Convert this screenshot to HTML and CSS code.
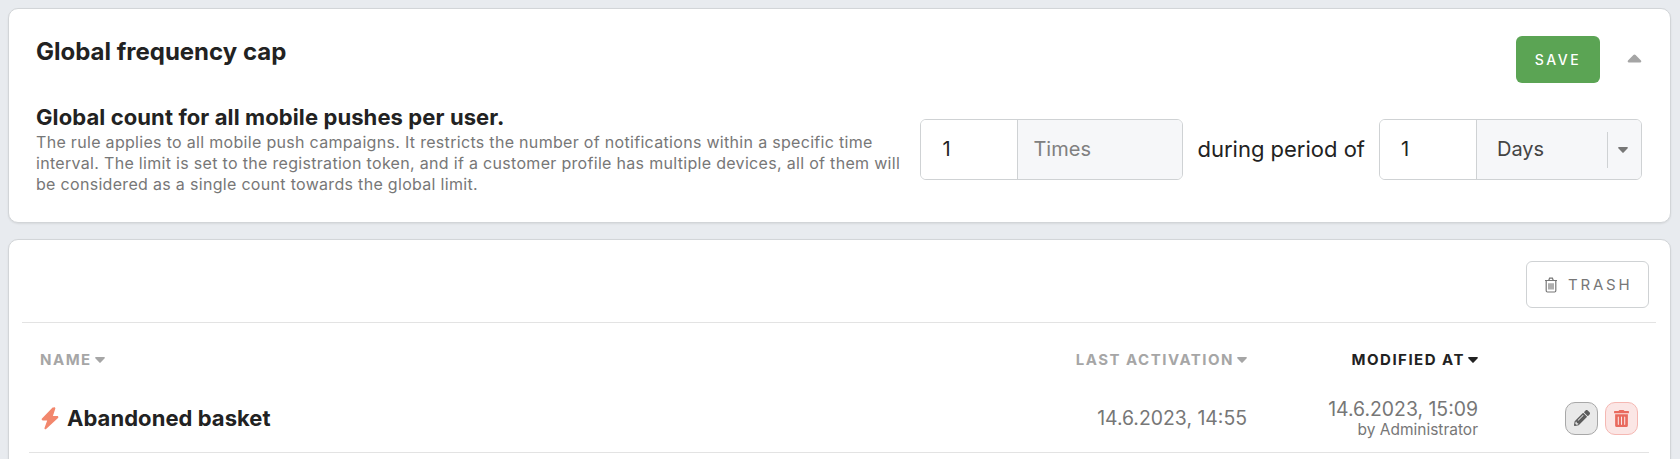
FILE: index.html
```html
<!DOCTYPE html>
<html lang="en">
<head>
<meta charset="utf-8">
<title>Global frequency cap</title>
<link rel="stylesheet" href="styles.css">
</head>
<body>
<section class="card cap">
  <header class="cap-head">
    <h1>Global frequency cap</h1>
    <div class="cap-actions">
      <button class="save">SAVE</button>
      <svg class="collapse" viewBox="0 0 15 9"><path d="M6.4 1 1 6.6C.3 7.4.8 8.6 1.8 8.6h11.4c1 0 1.5-1.2.8-2L8.6 1C8 .3 7 .3 6.4 1z"/></svg>
    </div>
  </header>
  <div class="cap-body">
    <div class="cap-text">
      <h2>Global count for all mobile pushes per user.</h2>
      <p>The rule applies to all mobile push campaigns. It restricts the number of notifications within a specific time interval. The limit is set to the registration token, and if a customer profile has multiple devices, all of them will be considered as a single count towards the global limit.</p>
    </div>
    <div class="cap-controls">
      <div class="group group-times">
        <div class="group-value">1</div>
        <div class="group-addon muted">Times</div>
      </div>
      <span class="during">during period of</span>
      <div class="group group-days">
        <div class="group-value">1</div>
        <div class="group-addon select">
          <span>Days</span>
          <i class="select-sep"></i>
          <svg class="select-caret" viewBox="0 0 10 6"><path d="M.9 0h8.2c.7 0 1 .8.6 1.3L5.6 5.6c-.3.4-.9.4-1.2 0L.3 1.3C-.1.8.2 0 .9 0z"/></svg>
        </div>
      </div>
    </div>
  </div>
</section>

<section class="card list">
  <div class="toolbar">
    <button class="trash">
      <svg class="trash-icon" viewBox="0 0 14 16"><path d="M1 3.5h12M4.8 3.3 5.6 1.2h2.8l.8 2.1M2.2 3.5v10.3c0 .7.5 1.2 1.2 1.2h7.2c.7 0 1.2-.5 1.2-1.2V3.5M5 6.2v6.2M7 6.2v6.2M9 6.2v6.2"/></svg>
      <span>TRASH</span>
    </button>
  </div>
  <div class="table">
    <div class="tr thead">
      <div class="th th-name">NAME<svg class="sort" viewBox="0 0 10 6"><path d="M.9 0h8.2c.7 0 1 .8.6 1.3L5.6 5.6c-.3.4-.9.4-1.2 0L.3 1.3C-.1.8.2 0 .9 0z"/></svg></div>
      <div class="th th-right">LAST ACTIVATION<svg class="sort" viewBox="0 0 10 6"><path d="M.9 0h8.2c.7 0 1 .8.6 1.3L5.6 5.6c-.3.4-.9.4-1.2 0L.3 1.3C-.1.8.2 0 .9 0z"/></svg></div>
      <div class="th th-right th-active">MODIFIED AT<svg class="sort" viewBox="0 0 10 6"><path d="M.9 0h8.2c.7 0 1 .8.6 1.3L5.6 5.6c-.3.4-.9.4-1.2 0L.3 1.3C-.1.8.2 0 .9 0z"/></svg></div>
      <div></div>
    </div>
    <div class="tr row">
      <div class="td-name">
        <svg class="bolt" viewBox="0 0 18 23"><path d="M11.6.6 1 11.6c-.7.7-.2 1.9.8 1.9h4.4L3.5 21c-.3 1 .9 1.7 1.6 1L17 11c.7-.7.2-1.9-.8-1.9h-4.3l2.4-7.4c.3-1-.9-1.8-1.7-1.1z"/></svg>
        <span>Abandoned basket</span>
      </div>
      <div class="td-date">14.6.2023, 14:55</div>
      <div class="td-date">
        <div>14.6.2023, 15:09</div>
        <div class="by">by Administrator</div>
      </div>
      <div class="td-actions">
        <button class="icon-btn edit"><svg viewBox="0 0 512 512"><path d="M497.9 142.1l-46.1 46.1c-4.7 4.7-12.3 4.7-17 0l-111-111c-4.7-4.7-4.7-12.3 0-17l46.1-46.1c18.7-18.7 49.1-18.7 67.9 0l60.1 60.1c18.8 18.7 18.8 49.1 0 67.9zM284.2 99.8L21.6 362.4.4 483.9c-2.9 16.4 11.4 30.6 27.8 27.8l121.5-21.3 262.6-262.6c4.7-4.7 4.7-12.3 0-17l-111-111c-4.8-4.7-12.4-4.7-17.1 0zM124.1 339.9c-5.5-5.5-5.5-14.3 0-19.8l154-154c5.5-5.5 14.3-5.5 19.8 0s5.5 14.3 0 19.8l-154 154c-5.5 5.5-14.3 5.5-19.8 0zM88 424h48v36.3l-64.5 11.3-31.1-31.1L51.7 376H88v48z"/></svg></button>
        <button class="icon-btn del"><svg viewBox="0 0 448 512"><path d="M32 464a48 48 0 0 0 48 48h288a48 48 0 0 0 48-48V128H32zm272-256a16 16 0 0 1 32 0v224a16 16 0 0 1-32 0zm-96 0a16 16 0 0 1 32 0v224a16 16 0 0 1-32 0zm-96 0a16 16 0 0 1 32 0v224a16 16 0 0 1-32 0zM432 32H312l-9.4-18.7A24 24 0 0 0 281.1 0H166.8a23.72 23.72 0 0 0-21.4 13.3L136 32H16A16 16 0 0 0 0 48v32a16 16 0 0 0 16 16h416a16 16 0 0 0 16-16V48a16 16 0 0 0-16-16z"/></svg></button>
      </div>
    </div>
  </div>
</section>
</body>
</html>
```
FILE: styles.css
```css
* { box-sizing: border-box; }
html, body { margin: 0; height: 100%; overflow: hidden; }
body {
  background: #e8ebef;
  padding: 8px 9px 0 8px;
  font-family: Inter, "Liberation Sans", sans-serif;
  color: #222;
}
button { font-family: inherit; cursor: pointer; }
.card {
  background: #fff;
  border: 1px solid #d2d5d8;
  border-radius: 10px;
  box-shadow: 0 1px 2px rgba(0, 0, 0, .08);
}
.cap { height: 215px; padding: 27px 28px 0 27px; margin-bottom: 16px; }
.cap-head { display: flex; justify-content: space-between; align-items: flex-start; height: 47px; margin-bottom: 20px; }
h1 { margin: 1px 0 0; font-size: 24px; line-height: 30px; font-weight: 700; color: #222; }
.cap-actions { display: flex; align-items: center; gap: 27px; }
.save {
  width: 84px; height: 47px;
  background: #5ba454; color: #fff;
  border: 0; border-radius: 6px;
  font-size: 14px; font-weight: 500; letter-spacing: 2.5px;
  padding: 0;
}
.collapse { width: 15px; height: 9px; fill: #a5a5a5; display: block; margin-bottom: 2px; }
.cap-body { display: flex; align-items: center; justify-content: space-between; }
.cap-text { width: 872px; }
h2 { margin: 0 0 1px; font-size: 22px; line-height: 28px; font-weight: 700; color: #222; letter-spacing: .1px; }
.cap-text p { margin: 0; font-size: 16px; line-height: 21px; color: #777; letter-spacing: .31px; }
.cap-controls { display: flex; align-items: center; }
.group {
  display: flex; height: 61px; width: 263px;
  border: 1px solid #cfd2d4; border-radius: 6px;
  overflow: hidden; font-size: 20px;
}
.group-value { width: 96px; padding: 0 21px; display: flex; align-items: center; color: #222; background: #fff; flex: none; }
.group-addon { flex: 1; display: flex; align-items: center; background: #f6f7f9; border-left: 1px solid #cfd2d4; padding-left: 15px; }
.muted { color: #808080; }
.select { padding-left: 20px; color: #444; position: relative; }
.select-sep { position: absolute; left: 130px; top: 12px; width: 1px; height: 36px; background: #cfd2d4; }
.select-caret { position: absolute; left: 141px; top: 27px; width: 10px; height: 6px; fill: #777; }
.during { font-size: 22px; color: #222; margin: 0 14px; white-space: nowrap; }

.list { height: 240px; padding: 21px 14px 0 13px; }
.toolbar { display: flex; justify-content: flex-end; padding: 0 7px 14px 0; border-bottom: 1px solid #e3e3e3; }
.trash {
  display: flex; align-items: center; gap: 10px;
  width: 123px; height: 47px; padding: 0 0 0 17px;
  background: #fff; color: #777;
  border: 1px solid #cfd2d4; border-radius: 6px;
  font-size: 15px; font-weight: 400; letter-spacing: 2.8px;
}
.trash-icon { width: 14px; height: 16px; fill: none; stroke: #777; stroke-width: 1.2; }
.table { margin: 0 7px; }
.tr { display: grid; grid-template-columns: 1fr 220px 231px 171px; align-items: center; }
.thead { height: 61px; padding-top: 12px; }
.th {
  font-size: 15px; font-weight: 700; letter-spacing: 1.5px; color: #a6a6a6;
  display: flex; align-items: center; gap: 3px;
}
.th-name { padding-left: 11px; }
.th-right { justify-content: flex-end; }
.th-active { color: #222; }
.sort { width: 10px; height: 6px; fill: currentColor; display: block; flex: none; }
.row { height: 69px; border-bottom: 1px solid #e3e3e3; }
.td-name { display: flex; align-items: center; gap: 8px; padding-left: 12px; font-size: 22px; font-weight: 700; color: #222; letter-spacing: .05px; }
.bolt { width: 18px; height: 23px; fill: #f2876d; flex: none; }
.td-date { text-align: right; font-size: 19.4px; line-height: 23px; color: #777; }
.by { font-size: 15.5px; line-height: 18px; }
.td-actions { display: flex; justify-content: flex-end; gap: 7px; padding-right: 11px; }
.icon-btn {
  width: 33px; height: 33px; padding: 0;
  border-radius: 10px; display: flex; align-items: center; justify-content: center;
}
.icon-btn svg { height: 17px; width: 17px; }
.edit { background: #e9e9e9; border: 1px solid #a8a8a8; }
.edit svg { fill: #5c5c5c; height: 16px; width: 16px; }
.del { background: #fbe6e5; border: 1px solid #f5b8b3; }
.del svg { fill: #e96a5e; }
```
